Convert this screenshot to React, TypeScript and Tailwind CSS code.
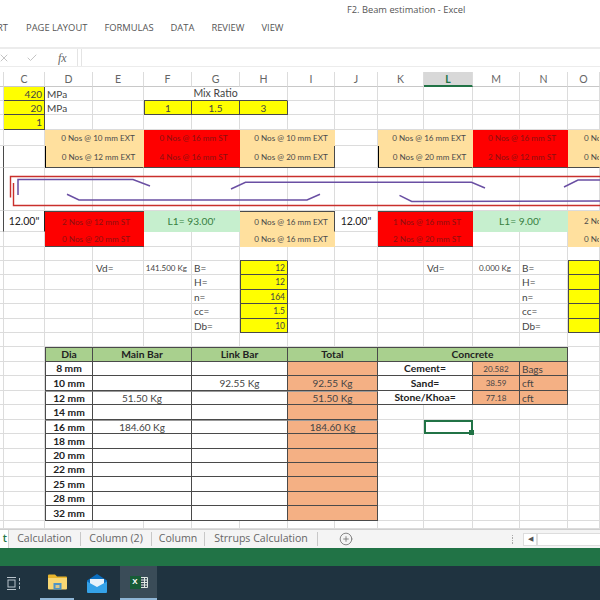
import React from "react";
import { twMerge } from "tailwind-merge";
import { Check, CirclePlus, X } from "lucide-react";

const base = "flex min-w-0 items-center justify-center overflow-hidden whitespace-nowrap border-r border-b border-[#dcdcdc] pt-px text-[#444]";
const DARK = "border-[#4a4a4a]";

function C({ className, children }: { className?: string; children?: React.ReactNode }) {
  return <div className={twMerge(base, className)}>{children}</div>;
}

// n plain empty cells
function B({ n }: { n: number }) {
  return <>{Array.from({ length: n }).map((_, i) => <C key={i} />)}</>;
}

const cream = "col-span-2 bg-[#ffe09e] border-transparent text-[8.1px] pl-2 text-[#4a4a4a]";
const red = "col-span-2 bg-[#fe0000] border-transparent text-[8.1px] pl-1 text-[#8b1010]";
const green = "col-span-2 bg-[#c6efce] border-transparent text-[10.2px] text-[#37803f]";
const yellow = `bg-[#ffff00] ${DARK} text-[10px]`;
const tableHead = `bg-[#a9d08e] ${DARK} border-t text-[10.3px] font-bold text-[#222]`;
const orange = `bg-[#f4b084] ${DARK}`;
const body = `${DARK}`;

const headers = ["C", "D", "E", "F", "G", "H", "I", "J", "K"];

const inputs = [
  { k: "B=", v: "12", vd: true },
  { k: "H=", v: "12" },
  { k: "n=", v: "164" },
  { k: "cc=", v: "1.5" },
  { k: "Db=", v: "10" },
];

const dias = [
  { d: "8 mm", link: "" },
  { d: "10 mm", link: "92.55 Kg", total: "92.55 Kg" },
  { d: "12 mm", main: "51.50 Kg", total: "51.50 Kg", soft: true },
  { d: "14 mm" },
  { d: "16 mm", main: "184.60 Kg", total: "184.60 Kg", soft: true },
  { d: "18 mm" },
  { d: "20 mm" },
  { d: "22 mm" },
  { d: "25 mm" },
  { d: "28 mm" },
  { d: "32 mm" },
];

const concrete = [
  { k: "Cement=", v: "20.582", u: "Bags" },
  { k: "Sand=", v: "38.59", u: "cft" },
  { k: "Stone/Khoa=", v: "77.18", u: "cft" },
];

function Rebar() {
  return (
    <svg className="pointer-events-none absolute left-0 top-0" width="600" height="160" viewBox="0 72 600 160" fill="none">
      <path d="M600 176.5H10.5V197.5M600 205.5H13.5V183" stroke="#c9302c" strokeWidth="1.4" />
      <g stroke="#6a4fa3" strokeWidth="1.5">
        <path d="M18 195V179.5H133L150 186" />
        <path d="M231 189L245.5 182.3H471.5L485 188" />
        <path d="M564 187L578 180H600" />
        <path d="M67 194.3L79 200H307L320 194.3" />
        <path d="M399.5 195.3L411.7 201.5L600 201" />
      </g>
    </svg>
  );
}

function Sheet() {
  return (
    <div className="relative h-[457px] overflow-hidden bg-white font-['Lato',sans-serif] text-[10.5px]">
      <div className="grid grid-cols-[4px_41px_48px_51px_48px_48px_48px_47px_43px_46px_49px_47px_48px_32px] grid-rows-[15px_14px_14px_15px_16px_22px_43px_21px_15px_14px_14px_15px_14px_15px_14px_14px_15px_14px_15px_14px_15px_14px_15px_14px_14px_15px_14px_15px_8px]">
        {/* column letters */}
        <C className="border-b-[#c8c8c8]" />
        {headers.map((h) => (
          <C key={h} className="border-b-[#c8c8c8] pt-[2px] text-[10.5px] text-[#666]">{h}</C>
        ))}
        <C className="border-b-2 border-b-[#217346] bg-[#d8d8d8] pt-[2px] text-[10.5px] font-bold text-[#217346]">L</C>
        {["M", "N", "O"].map((h) => (
          <C key={h} className="border-b-[#c8c8c8] pt-[2px] text-[10.5px] text-[#666]">{h}</C>
        ))}

        {/* material rows */}
        <C />
        <C className={`${yellow} justify-end pr-0.5 text-[10px]`}>420</C>
        <C className="justify-start pl-0.5 text-[10px]">MPa</C>
        <C />
        <C className={`col-span-3 text-[10.5px] ${DARK} border-r-[#dcdcdc]`}>Mix Ratio</C>
        <B n={7} />

        <C />
        <C className={`${yellow} justify-end pr-0.5 text-[10px]`}>20</C>
        <C className="justify-start pl-0.5 text-[10px]">MPa</C>
        <C />
        <C className={`${yellow} border-l`}>1</C>
        <C className={yellow}>1.5</C>
        <C className={yellow}>3</C>
        <B n={7} />

        <C />
        <C className={`${yellow} justify-end pr-0.5 text-[10px]`}>1</C>
        <B n={12} />

        {/* top bars */}
        <C />
        <C />
        <C className={cream}>0 Nos @ 10 mm EXT</C>
        <C className={red}>0 Nos @ 16 mm ST</C>
        <C className={cream}>0 Nos @ 10 mm EXT</C>
        <C />
        <C className={cream}>0 Nos @ 16 mm EXT</C>
        <C className={red}>0 Nos @ 16 mm ST</C>
        <C className={`${cream} col-span-1 justify-start pl-4`}>0 Nos</C>

        <C className="border-r-[#4a4a4a]" />
        <C />
        <C className={`${cream} border-l border-l-black border-b-[#4a4a4a]`}>0 Nos @ 12 mm EXT</C>
        <C className={`${red} border-b-[#4a4a4a]`}>4 Nos @ 16 mm ST</C>
        <C className={`${cream} border-b-[#4a4a4a] border-r-[#4a4a4a]`}>0 Nos @ 20 mm EXT</C>
        <C />
        <C className={`${cream} border-l border-l-black border-b-[#4a4a4a]`}>0 Nos @ 20 mm EXT</C>
        <C className={`${red} border-b-[#4a4a4a]`}>2 Nos @ 12 mm ST</C>
        <C className={`${cream} col-span-1 justify-start pl-4 border-b-[#4a4a4a]`}>0 Nos</C>

        {/* drawing row */}
        <C className="border-r-[#4a4a4a]" />
        <B n={13} />

        {/* bottom bars */}
        <C className="border-r-[#4a4a4a]" />
        <C className="border-r-[#222] text-[10.5px] text-[#222]">12.00"</C>
        <C className={`${red} border-t border-t-[#4a4a4a]`}>2 Nos @ 12 mm ST</C>
        <C className={green}>L1= 93.00'</C>
        <C className={`${cream} border-t border-t-[#4a4a4a] border-r-[#4a4a4a]`}>0 Nos @ 16 mm EXT</C>
        <C className="text-[10.5px] text-[#222]">12.00"</C>
        <C className={`${red} border-t border-t-[#4a4a4a]`}>1 Nos @ 16 mm ST</C>
        <C className={green}>L1= 9.00'</C>
        <C className={`${cream} col-span-1 justify-start pl-4`}>2 Nos</C>

        <C />
        <C />
        <C className={`${red} border-b-[#4a4a4a]`}>0 Nos @ 20 mm ST</C>
        <B n={2} />
        <C className={cream}>0 Nos @ 16 mm EXT</C>
        <C />
        <C className={`${red} border-b-[#4a4a4a]`}>2 Nos @ 20 mm ST</C>
        <B n={2} />
        <C className={`${cream} col-span-1 justify-start pl-4`}>0 Nos</C>

        <B n={6} />
        <C className="border-b-[#4a4a4a]" />
        <B n={6} />
        <C className="border-b-[#4a4a4a]" />

        {/* beam inputs */}
        {inputs.map((r) => (
          <React.Fragment key={r.k}>
            <B n={3} />
            <C className="justify-start pl-[3px] text-[10px]">{r.vd && "Vd="}</C>
            <C className="justify-end pr-1 text-[8px]">{r.vd && "141.500 Kg"}</C>
            <C className="justify-start pl-0.5 text-[10px]">{r.k}</C>
            <C className={`${yellow} border-l justify-end pr-0.5 text-[8.5px]`}>{r.v}</C>
            <B n={3} />
            <C className="justify-start pl-[3px] text-[10px]">{r.vd && "Vd="}</C>
            <C className="justify-end pr-2 text-[8px]">{r.vd && "0.000 Kg"}</C>
            <C className="justify-start pl-0.5 text-[10px]">{r.k}</C>
            <C className={`${yellow} border-l`} />
          </React.Fragment>
        ))}

        <B n={14} />

        {/* summary table */}
        <B n={2} />
        <C className={`${tableHead} border-l`}>Dia</C>
        <C className={`${tableHead} col-span-2`}>Main Bar</C>
        <C className={`${tableHead} col-span-2`}>Link Bar</C>
        <C className={`${tableHead} col-span-2`}>Total</C>
        <C className={`${tableHead} col-span-4`}>Concrete</C>
        <C />

        {dias.map((r, i) => {
          const line = r.soft ? "border-t border-t-[#999]" : "";
          const c = concrete[i];
          return (
            <React.Fragment key={r.d}>
              <B n={2} />
              <C className={`${body} border-l text-[10.3px] font-bold text-[#222] ${line}`}>{r.d}</C>
              <C className={`${body} col-span-2 text-[10px] ${line}`}>{r.main}</C>
              <C className={`${body} col-span-2 text-[10px] ${line}`}>{r.link}</C>
              <C className={`${orange} col-span-2 text-[10px] ${line}`}>{r.total}</C>
              {c ? (
                <>
                  <C className={`${body} col-span-2 text-[10.3px] font-bold text-[#222]`}>{c.k}</C>
                  <C className={`${orange} text-[8.1px]`}>{c.v}</C>
                  <C className={`${orange} justify-start pl-0.5 text-[10px]`}>{c.u}</C>
                  <C />
                </>
              ) : (
                <>
                  <C />
                  {i === 4 ? (
                    <div className="relative border-2 border-[#217346]">
                      <span className="absolute -bottom-[3px] -right-[3px] h-[5px] w-[5px] bg-[#217346]" />
                    </div>
                  ) : (
                    <C />
                  )}
                  <B n={3} />
                </>
              )}
            </React.Fragment>
          );
        })}

        <B n={14} />
      </div>
      <Rebar />
    </div>
  );
}

function TaskView() {
  return (
    <svg width="14" height="13" viewBox="0 0 14 13" fill="none" stroke="#b9c4cc" strokeWidth="1">
      <path d="M0 .5H9M0 12.5H9" />
      <rect x="1" y="3" width="7" height="7" />
      <path d="M12.5 1V4M12.5 5.5V7.5M12.5 9V12" />
    </svg>
  );
}

function Folder() {
  return (
    <svg width="19" height="16" viewBox="0 0 19 16">
      <path d="M0 1.5A1 1 0 0 1 1 .5H7L9 2.5H18A1 1 0 0 1 19 3.5V5H0Z" fill="#e8b52c" />
      <path d="M0 4H19V14.5A1 1 0 0 1 18 15.5H1A1 1 0 0 1 0 14.5Z" fill="#f7d774" />
      <rect x="5.5" y="9" width="8" height="6.5" fill="#4d94c6" />
      <rect x="7.5" y="11" width="4" height="3" fill="#d9c88a" />
    </svg>
  );
}

function Mail() {
  return (
    <svg width="20" height="19" viewBox="0 0 20 19">
      <path d="M0 6.5L10 0L20 6.5V10L10 15L0 10Z" fill="#0b6fc0" />
      <path d="M3 5H17V11L10 14.5L3 11Z" fill="#e8f2fa" />
      <path d="M0 7.5L10 13L20 7.5V18A1 1 0 0 1 19 19H1A1 1 0 0 1 0 18Z" fill="#35a2e8" />
    </svg>
  );
}

function ExcelIcon() {
  return (
    <div className="flex items-center">
      <div className="flex h-[13px] w-[11px] items-center justify-center bg-[#185c37] font-['Liberation_Sans',sans-serif] text-[8px] font-bold text-white">
        X
      </div>
      <svg width="7" height="13" viewBox="0 0 7 13" fill="none" stroke="#dfe8e2">
        <path d="M0 1.5H6.5V11.5H0M0 4H6.5M0 6.5H6.5M0 9H6.5M3.5 1.5V11.5" />
      </svg>
    </div>
  );
}

export default function App() {
  return (
    <div className="flex h-[600px] w-[600px] flex-col overflow-hidden bg-white font-['Open_Sans',sans-serif]">
      {/* title + ribbon tabs */}
      <div className="flex h-[47px] shrink-0 flex-col bg-white text-[#555]">
        <div className="h-[20px] pl-[347px] pt-[1px] text-[9.3px] leading-[17px]">F2. Beam estimation - Excel</div>
        <div className="flex h-[17px] items-center gap-[17px] text-[9.4px]">
          <span className="ml-[-3px] w-[12px]">RT</span>
          <span>PAGE LAYOUT</span>
          <span>FORMULAS</span>
          <span>DATA</span>
          <span>REVIEW</span>
          <span>VIEW</span>
        </div>
      </div>

      {/* formula bar */}
      <div className="flex h-[20px] shrink-0 border-t-2 border-b border-[#ececec]">
        <div className="flex w-[78px] items-center border-r border-[#e4e4e4] text-[#c4c4c4]">
          <X className="ml-[-2px] h-[12px] w-[12px]" />
          <Check className="ml-[16px] h-[12px] w-[12px]" />
          <span className="ml-[20px] font-['Liberation_Serif',serif] text-[12px] italic text-[#666]">fx</span>
        </div>
        <div className="ml-[3px] flex-1 border-l border-[#e4e4e4]" />
      </div>
      <div className="h-[5px] shrink-0 bg-white" />

      <Sheet />

      {/* sheet tabs */}
      <div className="flex h-[19px] shrink-0 items-center border-t border-[#cfcfcf] bg-[#f4f4f4] text-[10.6px] text-[#666]">
        <div className="flex h-full w-[9px] items-center justify-end overflow-hidden border-r border-[#cfcfcf] bg-white pr-[1px] font-semibold text-[#217346]">t</div>
        <div className="flex h-[14px] w-[72px] items-center justify-center border-r border-[#c8c8c8]">Calculation</div>
        <div className="flex h-[14px] w-[71px] items-center justify-center border-r border-[#c8c8c8]">Column (2)</div>
        <div className="flex h-[14px] w-[53px] items-center justify-center border-r border-[#c8c8c8]">Column</div>
        <div className="flex h-[14px] w-[113px] items-center justify-center border-r border-[#c8c8c8]">Strrups Calculation</div>
        <CirclePlus className="ml-[21px] h-[14px] w-[14px] text-[#777]" strokeWidth={1.5} />
        <div className="ml-auto mr-[10px] flex flex-col gap-[1px]">
          <span className="h-[1.5px] w-[1.5px] bg-[#aaa]" />
          <span className="h-[1.5px] w-[1.5px] bg-[#aaa]" />
          <span className="h-[1.5px] w-[1.5px] bg-[#aaa]" />
          <span className="h-[1.5px] w-[1.5px] bg-[#aaa]" />
        </div>
        <div className="flex h-[13px] w-[14px] items-center justify-center border border-[#ddd] bg-white text-[7px] text-[#555]">◀</div>
        <div className="h-[13px] w-[63px] border-y border-l border-[#ddd] bg-white" />
      </div>

      {/* status bar */}
      <div className="h-[18px] shrink-0 bg-[#217346]" />

      {/* windows taskbar */}
      <div className="flex flex-1 bg-[#1f3340]">
        <div className="flex w-[40px] items-center pl-[7px]">
          <TaskView />
        </div>
        <div className="flex w-[34px] items-center justify-center border-b-2 border-[#8fb6d6]">
          <Folder />
        </div>
        <div className="flex w-[46px] items-center justify-center">
          <Mail />
        </div>
        <div className="flex w-[37px] items-center justify-center border-b-2 border-[#8fb6d6] bg-[#3a4c58]">
          <ExcelIcon />
        </div>
      </div>
    </div>
  );
}
